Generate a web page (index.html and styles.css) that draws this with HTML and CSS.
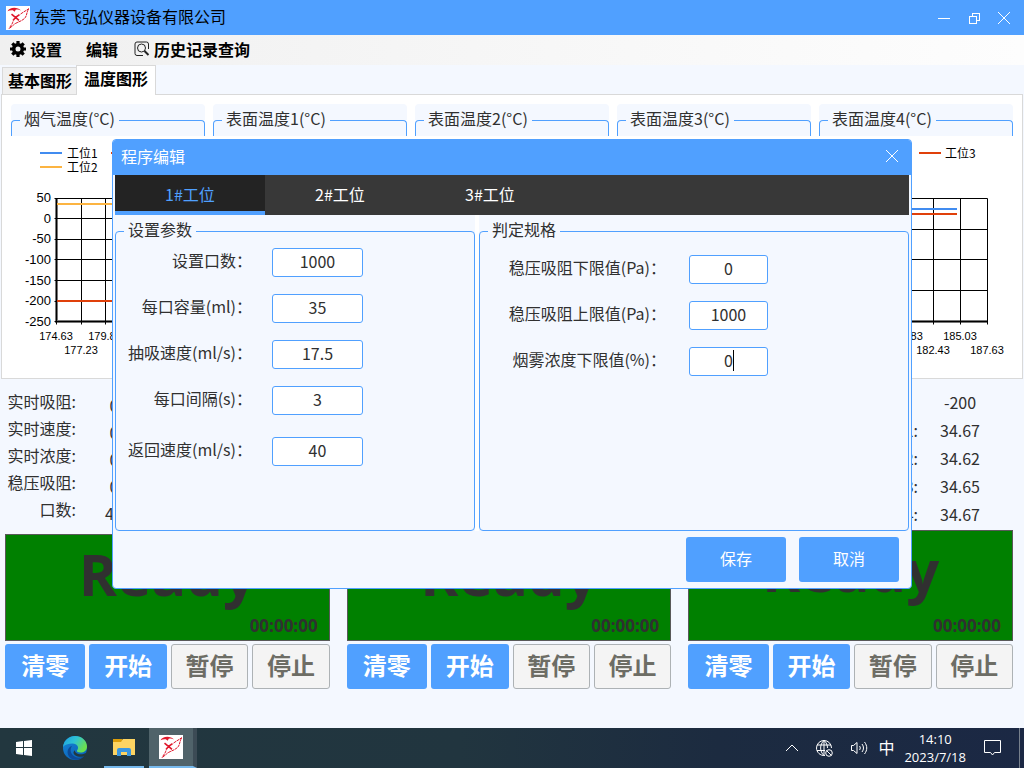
FILE: index.html
```html
<!DOCTYPE html>
<html lang="zh-CN">

<head>
  <meta charset="UTF-8">
  <meta name="viewport" content="width=device-width, initial-scale=1.0">
  <title>东莞飞弘仪器设备有限公司</title>
  <link rel="stylesheet" href="styles.css">
</head>

<body>
  <svg class="defs" aria-hidden="true">
    <symbol id="logo" viewBox="0 0 24 24">
      <rect width="24" height="24" fill="#fff" />
      <path d="M1.500 5.200C3 2.500 7 1 12 2.400c1.600.5 2.500 1.200 2.700 2-1.700-1-3.700-1-5-.6L8.700 5.800 6.800 4.300C4.900 4 3 4.600 1.500 5.200z" fill="#e0182c" />
      <path d="M5.500 8.200l4 3.200 4-2.800M9.500 11.400l-2.500 3M9.500 11.400l3.500 3" fill="none" stroke="#e0182c" stroke-width="1.600" />
      <path d="M23 2.500C20.500 4.500 17 6 14 8.500M22.500 3c-2 3.500-1.500 7-4 9.500-4 3.500-9 4-11 6.500L3 22.800M7 15.500c-.5 2.500-2.500 4.500-4 7" fill="none" stroke="#e0182c" stroke-width="1" stroke-dasharray="3 .6" />
    </symbol>
  </svg>

  <div class="app">
    <header class="titlebar">
      <svg class="logo"><use href="#logo" /></svg>
      <span class="title">东莞飞弘仪器设备有限公司</span>
      <button class="win" aria-label="最小化"><svg width="12" height="12"><path d="M0 6h12" /></svg></button>
      <button class="win" aria-label="还原"><svg width="12" height="12"><path d="M1 4h7v7H1zM4 4V1h7v7H8" /></svg></button>
      <button class="win" aria-label="关闭"><svg width="12" height="12"><path class="thin" d="M0 0l12 12M12 0L0 12" /></svg></button>
    </header>

    <nav class="menu">
      <button>
        <svg width="16" height="16" viewBox="0 0 16 16">
          <circle cx="8" cy="8" r="4.300" fill="none" stroke="#000" stroke-width="3.600" />
          <path d="M8 0v3M8 13v3M0 8h3M13 8h3M2.300 2.300l2.200 2.200M11.500 11.500l2.200 2.200M2.300 13.700l2.200-2.200M11.500 4.500l2.200-2.200" stroke="#000" stroke-width="3.200" />
        </svg>
        设置
      </button>
      <button class="edit">编辑</button>
      <button>
        <svg width="16" height="16" viewBox="0 0 16 16" fill="none" stroke="#222">
          <path d="M14.500 8V3a2 2 0 0 0-2-2H3a2 2 0 0 0-2 2v9.500a2 2 0 0 0 2 2h6" />
          <circle cx="7.500" cy="7" r="4" />
          <path d="M10.500 10l4 4" stroke-width="2" />
        </svg>
        历史记录查询
      </button>
    </nav>

    <div class="tabs">
      <button class="tab">基本图形</button>
      <button class="tab active">温度图形</button>
    </div>

    <section class="charts">
      <div class="groups">
        <fieldset><legend>烟气温度(°C)</legend></fieldset>
        <fieldset><legend>表面温度1(°C)</legend></fieldset>
        <fieldset><legend>表面温度2(°C)</legend></fieldset>
        <fieldset><legend>表面温度3(°C)</legend></fieldset>
        <fieldset><legend>表面温度4(°C)</legend></fieldset>
      </div>
      <div class="plots">
        <svg class="plot" width="200" height="242">
          <g class="key">
            <path class="blue" d="M38 17h22" />
            <path class="amber" d="M38 31h22" />
            <path class="red" d="M109 17h22" />
            <text x="65" y="22">工位1</text>
            <text x="65" y="36">工位2</text>
          </g>
          <g transform="translate(.5 .5)">
            <path class="axis" d="M54 62v123h123" />
            <path class="grid" d="M52 62h125M52 82h125M52 103h125M52 123h125M52 144h125M52 165h125M52 185h125M54 62v126M79 62v126M103 62v126M128 62v126M152 62v126M177 62v126" />
          </g>
          <path class="amber" d="M55 68h108" />
          <path class="red" d="M55 165h108" />
          <g class="y">
            <text x="49" y="66">50</text>
            <text x="49" y="87">0</text>
            <text x="49" y="107">-50</text>
            <text x="49" y="128">-100</text>
            <text x="49" y="149">-150</text>
            <text x="49" y="169">-200</text>
            <text x="49" y="190">-250</text>
          </g>
          <g class="x">
            <text x="54" y="204">174.63</text>
            <text x="79" y="218">177.23</text>
            <text x="103" y="204">179.83</text>
          </g>
        </svg>
        <svg class="plot" width="200" height="242">
          <g class="key">
            <path class="red" d="M97 17h22" />
            <text x="123" y="22">工位3</text>
          </g>
          <g transform="translate(.5 .5)">
            <path class="axis" d="M30 62v123h135" />
            <path class="grid" d="M28 62h137M28 93h137M28 123h137M28 154h137M28 185h137M30 62v126M57 62v126M84 62v126M111 62v126M138 62v126M165 62v126" />
          </g>
          <path class="blue" d="M31 73h104" />
          <path class="red" d="M31 78h104" />
          <g class="x">
            <text x="84" y="204">179.83</text>
            <text x="111" y="218">182.43</text>
            <text x="138" y="204">185.03</text>
            <text x="165" y="218">187.63</text>
          </g>
        </svg>
      </div>
    </section>

    <main class="stations">
      <section class="station">
        <div class="readings">
          <div class="names">
            <span>实时吸阻:</span><span>实时速度:</span><span>实时浓度:</span><span>稳压吸阻:</span><span>口数:</span>
          </div>
          <div class="values">
            <span>0</span><span>0</span><span>0</span><span>0</span><span>40</span>
          </div>
        </div>
        <div class="status"><strong>Ready</strong><time>00:00:00</time></div>
        <div class="actions">
          <button>清零</button><button>开始</button><button disabled>暂停</button><button disabled>停止</button>
        </div>
      </section>

      <section class="station">
        <div class="readings"></div>
        <div class="status"><strong>Ready</strong><time>00:00:00</time></div>
        <div class="actions">
          <button>清零</button><button>开始</button><button disabled>暂停</button><button disabled>停止</button>
        </div>
      </section>

      <section class="station">
        <div class="readings temps">
          <div class="names">
            <span></span><span>温度1:</span><span>温度2:</span><span>温度3:</span><span>温度4:</span>
          </div>
          <div class="values">
            <span>-200</span><span>34.67</span><span>34.62</span><span>34.65</span><span>34.67</span>
          </div>
        </div>
        <div class="status"><strong>Ready</strong><time>00:00:00</time></div>
        <div class="actions">
          <button>清零</button><button>开始</button><button disabled>暂停</button><button disabled>停止</button>
        </div>
      </section>
    </main>

    <div class="overlay">
      <form class="dialog" role="dialog" aria-labelledby="dialog-title">
        <div class="dialog-head">
          <span id="dialog-title">程序编辑</span>
          <button type="button" class="win" aria-label="关闭"><svg width="12" height="12"><path class="thin" d="M0 0l12 12M12 0L0 12" /></svg></button>
        </div>
        <div class="dialog-tabs">
          <button type="button" class="active">1#工位</button>
          <button type="button">2#工位</button>
          <button type="button">3#工位</button>
        </div>
        <div class="panels">
          <div class="panel params">
            <fieldset>
              <legend>设置参数</legend>
              <div class="row"><label for="puffs">设置口数：</label><input id="puffs" value="1000"></div>
              <div class="row"><label for="volume">每口容量(ml)：</label><input id="volume" value="35"></div>
              <div class="row"><label for="speed">抽吸速度(ml/s)：</label><input id="speed" value="17.5"></div>
              <div class="row"><label for="interval">每口间隔(s)：</label><input id="interval" value="3"></div>
              <div class="row return"><label for="back">返回速度(ml/s)：</label><input id="back" value="40"></div>
            </fieldset>
          </div>
          <div class="panel limits">
            <fieldset>
              <legend>判定规格</legend>
              <div class="row"><label for="low">稳压吸阻下限值(Pa)：</label><input id="low" value="0"></div>
              <div class="row"><label for="high">稳压吸阻上限值(Pa)：</label><input id="high" value="1000"></div>
              <div class="row"><label for="smoke">烟雾浓度下限值(%)：</label><input id="smoke" value="0"><i class="caret"></i></div>
            </fieldset>
          </div>
        </div>
        <div class="dialog-foot">
          <button type="button">保存</button>
          <button type="button">取消</button>
        </div>
      </form>
    </div>
  </div>

  <footer class="taskbar">
    <button class="task" aria-label="开始">
      <svg width="16" height="16" fill="#fff"><path d="M0 2l7-1v6H0zM8 1l8-1v7H8zM0 8h7v7l-7-1zM8 8h8v8l-8-1z" /></svg>
    </button>
    <button class="task edge" aria-label="Edge">
      <svg width="24" height="24" viewBox="0 0 24 24">
        <defs>
          <linearGradient id="edgeTop" x1="0" y1="0" x2="1" y2=".5"><stop offset="0" stop-color="#1b9de2" /><stop offset=".5" stop-color="#2fc3d5" /><stop offset="1" stop-color="#6be04e" /></linearGradient>
          <linearGradient id="edgeBody" x1="0" y1="0" x2=".6" y2="1"><stop offset="0" stop-color="#1787d8" /><stop offset="1" stop-color="#0b63b8" /></linearGradient>
        </defs>
        <circle cx="12" cy="12" r="12" fill="url(#edgeBody)" />
        <path d="M0 11C1 4 6 0 12 0c7 0 12 5 12 10.500 0 4-3 6-6.500 6-2.500 0-4-1-3.500-2 2.500-3 .5-7-4.500-7C5 7.500 1.500 9 0 11z" fill="url(#edgeTop)" />
        <path d="M9 10c-3 4-1 10 5 11.500 3 .7 6-.5 8-2.500C19 24 10 26 6 20.500 3 16 5 11 9 10z" fill="#0d4a96" />
        <path d="M12 14c-1 3 5 6 11 3l1 1-1 1.500c-5 2.500-13 1-12.500-3.500z" fill="#22383f" />
      </svg>
    </button>
    <button class="task open" aria-label="文件资源管理器">
      <svg width="22" height="18" viewBox="0 0 22 18">
        <path d="M0 1h9l2 2h-2v4H0z" fill="#dd9e0a" />
        <path d="M0 4h8l2-3h12v16H0z" fill="#fdd462" />
        <path d="M4 18v-6a2 2 0 0 1 2-2h10a2 2 0 0 1 2 2v6h-4v-4H8v4z" fill="#3b97e0" />
      </svg>
    </button>
    <button class="task open current" aria-label="东莞飞弘仪器设备有限公司">
      <svg class="logo"><use href="#logo" /></svg>
    </button>

    <div class="tray">
      <svg width="12" height="8"><path d="M0 7l6-6 6 6" /></svg>
      <svg width="17" height="17" viewBox="0 0 17 17">
        <path d="M9 15.500C4 16 .5 12 .5 8A7.500 7.500 0 0 1 15.500 8M8 .5c-4.500 4-4.500 11 0 15M8 .5c2.500 2 3.500 5 3.500 7.500M8 .5V15M1 5h14M1 10.500h8" />
        <circle cx="13" cy="13" r="3.300" /><path d="M10.800 10.800l4.400 4.400" />
      </svg>
      <svg width="17" height="14" viewBox="0 0 17 14">
        <path d="M.5 4.500h2l3.500-3v11l-3.500-3h-2zM8.500 5c1 1.200 1 2.800 0 4M11 3c2 2.500 2 5.500 0 8M13.500 1c3 4 3 8 0 12" />
      </svg>
      <span class="ime">中</span>
      <div class="clock"><span>14:10</span><span>2023/7/18</span></div>
      <svg width="17" height="16"><path d="M.5 .5h16v12h-6l-2 2.500-2-2.500h-6z" /></svg>
      <button class="desktop" aria-label="显示桌面"></button>
    </div>
  </footer>
</body>

</html>
```
FILE: styles.css
```css
* {
  box-sizing: border-box;
}

body {
  display: flex;
  flex-direction: column;
  min-height: 100vh;
  margin: 0;
  color: #303030;
  background: #f4f8ff;
  font: 16px/24px "Noto Sans CJK SC", sans-serif;
}

button,
input {
  padding: 0 0 3px;
  border: 0;
  background: none;
  color: inherit;
  font: inherit;
}

fieldset {
  min-width: 0;
  margin: 0;
  padding: 0;
  border: 1px solid #50a0ff;
  border-radius: 4px;
}

legend {
  margin-left: 8px;
  padding: 0 4px 4px;
  line-height: 28px;
}

.defs {
  position: absolute;
  width: 0;
  height: 0;
}

.logo {
  width: 24px;
  height: 24px;
}

.app {
  position: relative;
  flex: 1;
}

/* title bar */
.titlebar {
  display: flex;
  align-items: center;
  height: 35px;
  padding: 0 5px 0 6px;
  background: #50a0ff;
  color: #000;
}

.title {
  flex: 1;
  margin-left: 4px;
  padding-bottom: 3px;
}

.win {
  display: flex;
  align-items: center;
  justify-content: center;
  width: 30px;
  height: 35px;
  padding: 0;
}

.win path {
  fill: none;
  stroke: #fff;
  shape-rendering: crispEdges;
}

.win .thin {
  shape-rendering: auto;
}

/* menu and tabs */
.menu {
  display: flex;
  align-items: center;
  gap: 16px;
  height: 30px;
  padding-left: 10px;
  background: linear-gradient(90deg, #f0f0f0, #fdfdfd);
}

.menu button {
  display: flex;
  align-items: center;
  gap: 4px;
  padding-bottom: 2px;
  color: #000;
  font-weight: bold;
}

.menu .edit {
  margin-left: 8px;
}

.tabs {
  display: flex;
  align-items: flex-end;
  height: 29px;
  padding-left: 2px;
}

.tab {
  height: 27px;
  padding: 0 5px 2px;
  border: 1px solid #d9d9d9;
  border-width: 1px 0 0 1px;
  background: #f0f0f0;
  color: #000;
  font-weight: bold;
}

.tab.active {
  position: relative;
  height: 30px;
  margin: 0 0 -1px -1px;
  padding: 0 7px 6px;
  border-width: 1px 1px 0;
  background: #fff;
}

/* charts */
.charts {
  margin: 0 1px;
  border: 1px solid #d9d9d9;
  background: #fff;
}

.groups {
  display: grid;
  grid-template-columns: repeat(5, 1fr);
  gap: 8px;
  padding: 9px 9px 0;
}

.groups fieldset {
  height: 32px;
  border-bottom: 0;
  border-radius: 4px 4px 0 0;
  background: #f4f8ff;
  box-shadow: 0 -16px #f4f8ff;
  clip-path: inset(-16px 0 0);
}

.plots {
  display: flex;
  justify-content: space-between;
}

.plot path {
  fill: none;
  stroke-width: 2;
}

.plot .blue {
  stroke: #418cf0;
}

.plot .amber {
  stroke: #fcb441;
}

.plot .red {
  stroke: #e0400a;
}

.plot .axis {
  stroke: #777;
  stroke-width: 3;
}

.plot .grid {
  stroke: #000;
  stroke-width: 1;
}

.plot text {
  fill: #000;
}

.key {
  font-size: 12px;
}

.y {
  font: 13px "Liberation Sans", sans-serif;
  text-anchor: end;
}

.x {
  font: 11px "Liberation Sans", sans-serif;
  text-anchor: middle;
}

/* stations */
.stations {
  display: grid;
  grid-template-columns: repeat(3, 1fr);
  gap: 17px;
  padding: 10px 11px 39px 5px;
}

.station {
  display: flex;
  flex-direction: column;
}

.readings {
  display: flex;
  gap: 18px;
  height: 145px;
  line-height: 25px;
}

.readings span {
  display: block;
  height: 27px;
}

.names {
  width: 71px;
  text-align: right;
}

.values {
  width: 40px;
  padding-top: 4px;
  text-align: center;
}

.temps {
  justify-content: flex-end;
  gap: 22px;
  height: 141px;
  padding-right: 33px;
  line-height: 26px;
}

.temps span {
  height: 28px;
}

.temps .values {
  padding-top: 0;
}

.status {
  display: flex;
  flex: 1;
  flex-direction: column;
  min-height: 107px;
  border: 1px solid #595959;
  background: #008000;
  font-family: "Open Sans", sans-serif;
  font-weight: bold;
  text-align: center;
}

.status strong {
  flex: 1;
  font-size: 58px;
  font-weight: 700;
  line-height: 78px;
}

.status time {
  padding: 0 11px 3px 0;
  font-size: 17px;
  line-height: 22px;
  text-align: right;
}

.actions {
  display: grid;
  grid-template-columns: 80fr 77fr 77fr 77fr;
  gap: 4px;
  margin-top: 3px;
}

.actions button {
  height: 45px;
  border-radius: 3px;
  background: #50a0ff;
  color: #fff;
  font-size: 24px;
  font-weight: bold;
}

.actions button:disabled {
  border: 1px solid #adb2b5;
  background: #f4f4f4;
  color: #6d6d65;
}

/* dialog */
.overlay {
  position: absolute;
  inset: 0;
  display: flex;
  align-items: center;
  justify-content: center;
}

.dialog {
  width: 800px;
  border: 1px solid #50a0ff;
  border-radius: 4px;
  background: #f4f8ff;
  overflow: hidden;
}

.dialog-head {
  display: flex;
  align-items: center;
  justify-content: space-between;
  height: 35px;
  padding: 0 4px 3px 8px;
  background: #50a0ff;
  color: #fff;
}

.dialog-tabs {
  display: flex;
  height: 40px;
  margin: 0 2px;
  background: #383838;
  color: #fff;
}

.dialog-tabs button {
  width: 150px;
}

.dialog-tabs .active {
  border-bottom: 4px solid #50a0ff;
  padding: 1px 0 0;
  background: #232323;
  color: #50a0ff;
}

.panels {
  display: flex;
  gap: 4px;
  margin: 0 2px;
  background: #fff;
}

.panel {
  background: #f4f8ff;
}

.panel fieldset {
  height: 316px;
}

.params {
  width: 360px;
}

.params fieldset {
  padding-top: 1px;
}

.limits {
  flex: 1;
}

.limits fieldset {
  padding-top: 8px;
}

.row {
  position: relative;
  display: flex;
  gap: 20px;
  margin-bottom: 17px;
}

.row label {
  width: 136px;
  line-height: 25px;
  text-align: right;
  white-space: nowrap;
}

.row input {
  width: 91px;
  height: 29px;
  border: 1px solid #50a0ff;
  border-radius: 3px;
  background: #fff;
  text-align: center;
}

.return {
  margin-top: 22px;
}

.limits .row {
  gap: 23px;
}

.limits label {
  width: 186px;
}

.limits input {
  width: 79px;
}

.caret {
  position: absolute;
  top: 3px;
  left: 253px;
  width: 1px;
  height: 21px;
  background: #000;
}

.dialog-foot {
  display: flex;
  justify-content: flex-end;
  gap: 13px;
  padding: 6px 12px;
}

.dialog-foot button {
  width: 100px;
  height: 45px;
  border-radius: 3px;
  background: #50a0ff;
  color: #fff;
}

/* taskbar */
.taskbar {
  display: flex;
  height: 40px;
  background: linear-gradient(90deg, #22373f 0%, #21353f 45%, #1c2b40 70%, #1b2844 100%);
  color: #fff;
}

.task {
  display: flex;
  align-items: center;
  justify-content: center;
  width: 48px;
  padding: 0;
}

.edge {
  margin: 0 5px 0 3px;
}

.open {
  width: 40px;
  border-bottom: 2px solid #76b9ed;
}

.current {
  width: 48px;
  margin-left: 5px;
  border-right: 4px solid #3c4b55;
  background: #50636a;
}

.tray {
  display: flex;
  align-items: center;
  gap: 18px;
  margin-left: auto;
}

.tray path,
.tray circle {
  fill: none;
  stroke: #fff;
}

.ime {
  margin: 0 -8px;
  padding-bottom: 2px;
}

.clock {
  font: 13px/18px "Open Sans", sans-serif;
  text-align: center;
}

.clock span {
  display: block;
}

.desktop {
  width: 5px;
  height: 40px;
  border-left: 1px solid #77808c;
}
```
